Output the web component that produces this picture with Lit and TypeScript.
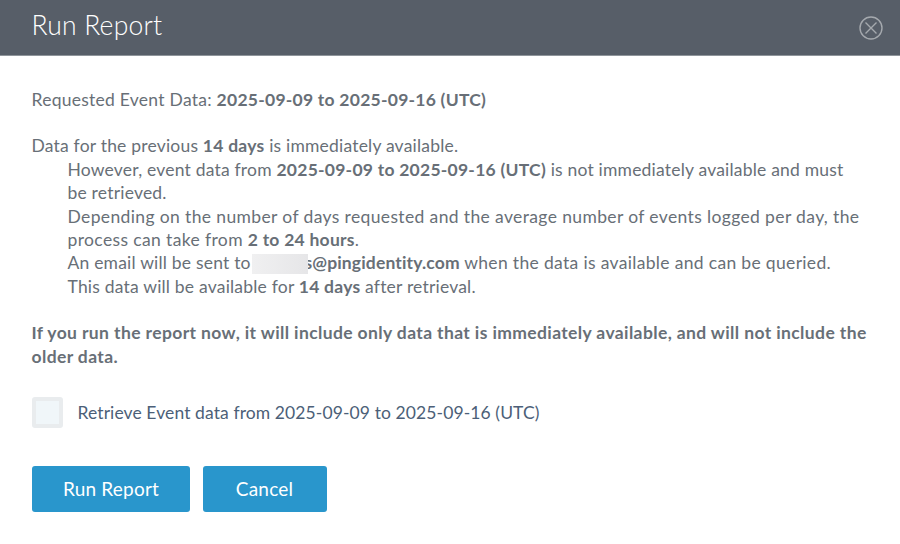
import { LitElement, html, css } from "lit";
import { customElement } from "lit/decorators.js";

@customElement("app-root")
export class AppRoot extends LitElement {
  static styles = css`
    :host { display: block; width: 900px; height: 544px; background: #fff; overflow: hidden;
      font-family: Lato, "Open Sans", sans-serif; color: #686f77; font-size: 17.5px; line-height: 23.4px; letter-spacing: 0.2px; }
    header { background: #575e68; border-bottom: 1px solid #8f959b; display: flex; align-items: center;
      justify-content: space-between; padding: 0 17px 4px 31.5px; box-sizing: border-box; height: 56px; }
    h1 { margin: 0; font-weight: 300; font-size: 26.5px; color: #fff; letter-spacing: 0.2px; }
    .close { display: block; margin-top: 4px; }
    main { padding: 32px 33px 0 31.5px; }
    p { margin: 0; }
    .req { margin-bottom: 23px; letter-spacing: 0.26px; }
    .list { padding-left: 36px; }
    .wide { letter-spacing: 0.37px; }
    .warn { font-weight: 700; margin: 23px -3px 0 0; letter-spacing: 0.38px; }
    b { font-weight: 700; letter-spacing: 0.25px; }
    b.mail { letter-spacing: 0.15px; }
    .tail { letter-spacing: 0.33px; }
    .redact { display: inline-block; position: relative; width: 56px; height: 20px; margin: 0 -4px 0 -3px; vertical-align: -5px;
      background: linear-gradient(90deg, #f0f0f1, #e6e6e8); }
    .check { display: flex; align-items: center; gap: 15px; margin-top: 29px; color: #4c5f78; letter-spacing: 0.1px; }
    .box { width: 31px; height: 31px; box-sizing: border-box; border: 4px solid #e9ecee; background: #f0f6f9; border-radius: 3px; }
    .actions { display: flex; gap: 13px; margin-top: 38px; }
    button { height: 46px; border: 0; border-radius: 3px; background: #2996cc; color: #fff; font: inherit; font-size: 19px; letter-spacing: 0.2px; padding: 0; }
    .run { width: 158px; padding-left: 1px; }
    .cancel { width: 124px; }
  `;

  render() {
    return html`
      <header>
        <h1>Run Report</h1>
        <svg class="close" width="24" height="24" viewBox="0 0 24 24" fill="none" stroke="#a5a9ae" stroke-width="1.4">
          <circle cx="12" cy="12" r="11"></circle>
          <path d="M6.5 6.5 17.5 17.5M17.5 6.5 6.5 17.5"></path>
        </svg>
      </header>
      <main>
        <p class="req">Requested Event Data: <b>2025-09-09 to 2025-09-16 (UTC)</b></p>
        <p>Data for the previous <b>14 days</b> is immediately available.</p>
        <div class="list">
          <p>However, event data from <b>2025-09-09 to 2025-09-16 (UTC)</b> is not immediately available and must be retrieved.</p>
          <p class="wide">Depending on the number of days requested and the average number of events logged per day, the process can take from <b>2 to 24 hours</b>.</p>
          <p>An email will be sent to <span class="redact"></span><b class="mail">s@pingidentity.com</b><span class="tail"> when the data is available and can be queried.</span></p>
          <p>This data will be available for <b>14 days</b> after retrieval.</p>
        </div>
        <p class="warn">If you run the report now, it will include only data that is immediately available, and will not include the older data.</p>
        <div class="check"><span class="box"></span><span>Retrieve Event data from 2025-09-09 to 2025-09-16 (UTC)</span></div>
        <div class="actions"><button class="run">Run Report</button><button class="cancel">Cancel</button></div>
      </main>
    `;
  }
}
